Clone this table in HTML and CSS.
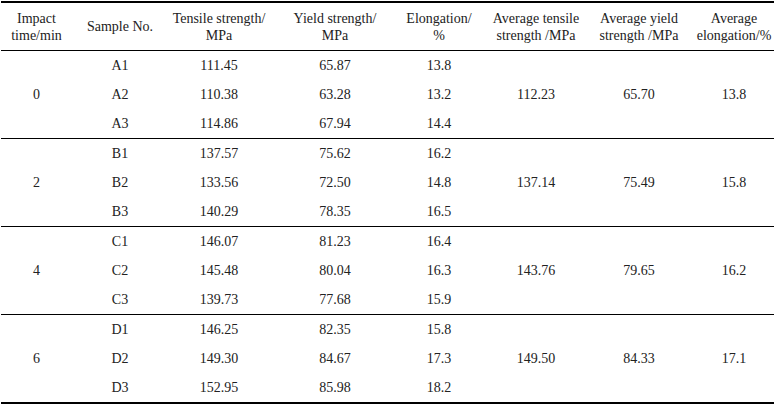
FILE: index.html
```html
<!DOCTYPE html>
<html>
<head>
<meta charset="utf-8">
<link rel="stylesheet" href="styles.css">
</head>
<body>
<table class="data">
  <colgroup>
    <col class="c1"><col class="c2"><col class="c3"><col class="c4"><col class="c5"><col class="c6"><col class="c7"><col class="c8">
  </colgroup>
  <thead>
    <tr>
      <th>Impact<br>time/min</th>
      <th>Sample No.</th>
      <th>Tensile strength/<br>MPa</th>
      <th>Yield strength/<br>MPa</th>
      <th>Elongation/<br>%</th>
      <th>Average tensile<br>strength /MPa</th>
      <th>Average yield<br>strength /MPa</th>
      <th class="last">Average<br>elongation/%</th>
    </tr>
  </thead>
  <tbody>
    <tr><td rowspan="3">0</td><td>A1</td><td>111.45</td><td>65.87</td><td>13.8</td><td rowspan="3">112.23</td><td rowspan="3">65.70</td><td rowspan="3" class="last">13.8</td></tr>
    <tr><td>A2</td><td>110.38</td><td>63.28</td><td>13.2</td></tr>
    <tr><td>A3</td><td>114.86</td><td>67.94</td><td>14.4</td></tr>
  </tbody>
  <tbody>
    <tr><td rowspan="3">2</td><td>B1</td><td>137.57</td><td>75.62</td><td>16.2</td><td rowspan="3">137.14</td><td rowspan="3">75.49</td><td rowspan="3" class="last">15.8</td></tr>
    <tr><td>B2</td><td>133.56</td><td>72.50</td><td>14.8</td></tr>
    <tr><td>B3</td><td>140.29</td><td>78.35</td><td>16.5</td></tr>
  </tbody>
  <tbody>
    <tr><td rowspan="3">4</td><td>C1</td><td>146.07</td><td>81.23</td><td>16.4</td><td rowspan="3">143.76</td><td rowspan="3">79.65</td><td rowspan="3" class="last">16.2</td></tr>
    <tr><td>C2</td><td>145.48</td><td>80.04</td><td>16.3</td></tr>
    <tr><td>C3</td><td>139.73</td><td>77.68</td><td>15.9</td></tr>
  </tbody>
  <tbody class="final">
    <tr><td rowspan="3">6</td><td>D1</td><td>146.25</td><td>82.35</td><td>15.8</td><td rowspan="3">149.50</td><td rowspan="3">84.33</td><td rowspan="3" class="last">17.1</td></tr>
    <tr><td>D2</td><td>149.30</td><td>84.67</td><td>17.3</td></tr>
    <tr><td>D3</td><td>152.95</td><td>85.98</td><td>18.2</td></tr>
  </tbody>
</table>
</body>
</html>
```

FILE: styles.css
```css
html, body {
  margin: 0;
  padding: 0;
  background: #fff;
}

body {
  padding: 1px 0 0 1px;
  font-family: "Liberation Serif", "Times New Roman", serif;
  font-size: 14px;
  color: #222;
}

.data {
  border-collapse: collapse;
  table-layout: fixed;
  width: 773px;
}

.c1 { width: 71px; }
.c2 { width: 96px; }
.c3 { width: 102px; }
.c4 { width: 130px; }
.c5 { width: 78px; }
.c6 { width: 116px; }
.c7 { width: 90px; }
.c8 { width: 90px; }

.data th,
.data td {
  padding: 0;
  text-align: center;
  vertical-align: middle;
  font-weight: normal;
  white-space: nowrap;
}

.data th {
  height: 47px;
  line-height: 17px;
}

.data td {
  height: 29px;
  line-height: 17px;
}

.data .last {
  padding-left: 10px;
}

.data thead tr {
  border-top: 2px solid #000;
  border-bottom: 1px solid #000;
}

.data tbody {
  border-bottom: 1px solid #000;
}

.data tbody.final {
  border-bottom: 2px solid #000;
}
```
